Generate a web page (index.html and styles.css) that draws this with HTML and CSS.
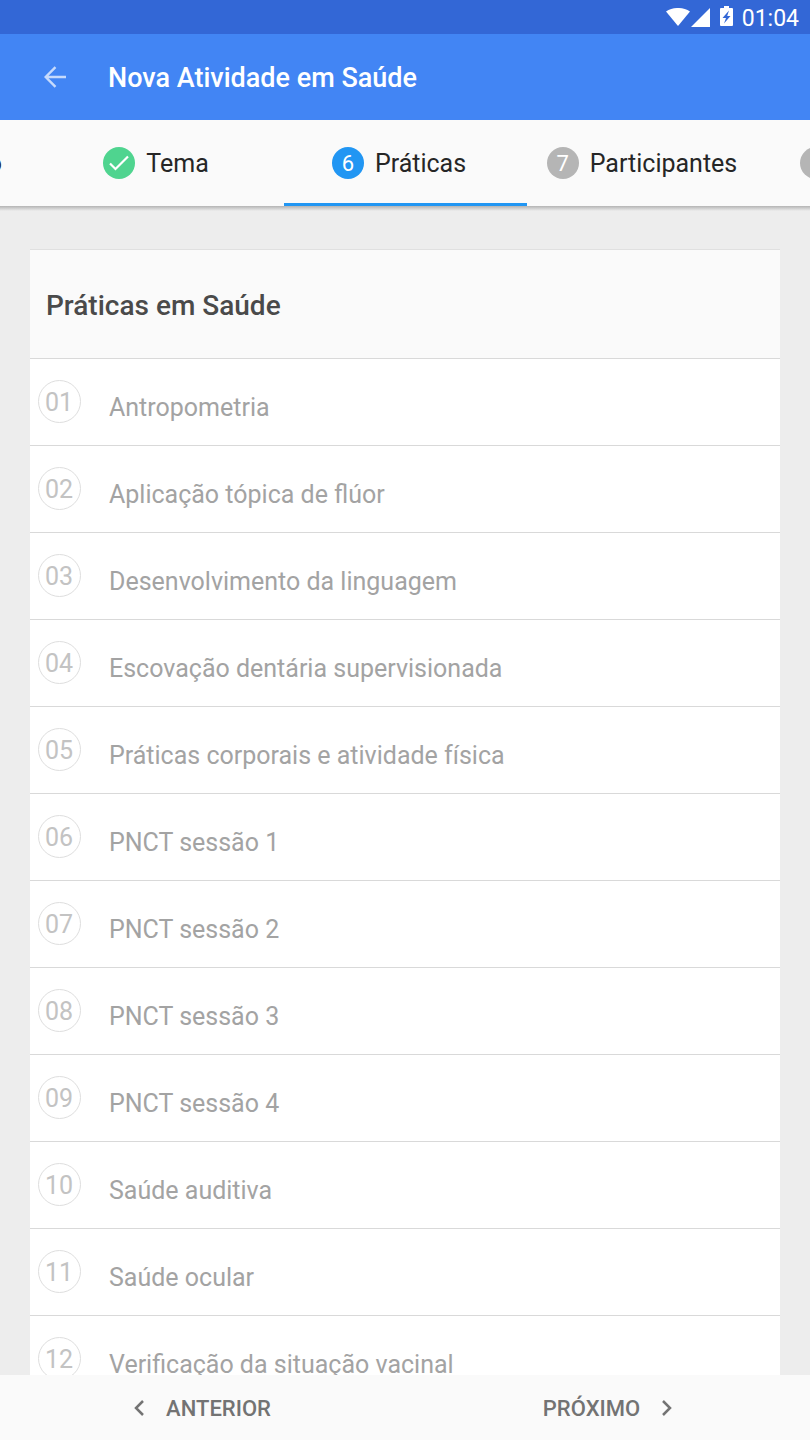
FILE: index.html
```html
<!DOCTYPE html>
<html lang="pt-BR">
<head>
<meta charset="utf-8">
<meta name="viewport" content="width=device-width, initial-scale=1">
<title>Nova Atividade em Saúde</title>
<link rel="stylesheet" href="styles.css">
</head>
<body>
<div class="status-bar">
  <svg class="status-wifi" width="24" height="18" viewBox="0 0 24 18" aria-hidden="true"><path d="M0 3.500C7-1.200 17-1.200 24 3.500L12 18z" fill="currentColor"/></svg>
  <svg class="status-signal" width="19" height="19" viewBox="0 0 19 19" aria-hidden="true"><path d="M19 0v19H0z" fill="currentColor"/></svg>
  <svg class="status-battery" width="13" height="20" viewBox="0 0 13 20" aria-hidden="true"><path fill-rule="evenodd" d="M4 0h5v2h3q1 0 1 1v16q0 1-1 1H1q-1 0-1-1V3q0-1 1-1h3zM9 4.500L2.500 12H6l-2 5.500L10.500 10H7.200z" fill="currentColor"/></svg>
  <time class="status-time">01:04</time>
</div>
<header class="app-bar">
  <button class="back" type="button" aria-label="Voltar">
    <svg width="22" height="22" viewBox="0 0 22 22" aria-hidden="true"><path d="M22 11H2M11.500 1.200L1.700 11l9.800 9.800" fill="none" stroke="currentColor" stroke-width="2.400"/></svg>
  </button>
  <h1 class="app-title">Nova Atividade em Saúde</h1>
</header>
<nav class="steps" aria-label="Etapas">
  <a class="step" href="#publico"><span class="badge badge-done">✓</span><span class="step-label">Público alvo</span></a>
  <a class="step" href="#tema"><span class="badge badge-done"><svg width="20" height="16" viewBox="0 0 20 16" aria-hidden="true"><path d="M1 8.500l5.500 5.500L19 1.500" fill="none" stroke="currentColor" stroke-width="2.200"/></svg></span><span class="step-label">Tema</span></a>
  <a class="step step-active" href="#praticas" aria-current="step"><span class="badge badge-active">6</span><span class="step-label">Práticas</span></a>
  <a class="step" href="#participantes"><span class="badge">7</span><span class="step-label">Participantes</span></a>
  <a class="step" href="#finalizacao"><span class="badge">8</span><span class="step-label">Finalização</span></a>
</nav>
<main class="content">
  <section class="card" id="praticas">
    <h2 class="card-title">Práticas em Saúde</h2>
    <ol class="list">
      <li class="item"><span class="number">01</span><span class="label">Antropometria</span></li>
      <li class="item"><span class="number">02</span><span class="label">Aplicação tópica de flúor</span></li>
      <li class="item"><span class="number">03</span><span class="label">Desenvolvimento da linguagem</span></li>
      <li class="item"><span class="number">04</span><span class="label">Escovação dentária supervisionada</span></li>
      <li class="item"><span class="number">05</span><span class="label">Práticas corporais e atividade física</span></li>
      <li class="item"><span class="number">06</span><span class="label">PNCT sessão 1</span></li>
      <li class="item"><span class="number">07</span><span class="label">PNCT sessão 2</span></li>
      <li class="item"><span class="number">08</span><span class="label">PNCT sessão 3</span></li>
      <li class="item"><span class="number">09</span><span class="label">PNCT sessão 4</span></li>
      <li class="item"><span class="number">10</span><span class="label">Saúde auditiva</span></li>
      <li class="item"><span class="number">11</span><span class="label">Saúde ocular</span></li>
      <li class="item"><span class="number">12</span><span class="label">Verificação da situação vacinal</span></li>
    </ol>
  </section>
</main>
<footer class="pager">
  <button class="pager-button" type="button"><svg width="10" height="16" viewBox="0 0 10 16" aria-hidden="true"><path d="M9 1L2 8l7 7" fill="none" stroke="currentColor" stroke-width="2.500"/></svg><span class="pager-label">ANTERIOR</span></button>
  <button class="pager-button" type="button"><span class="pager-label">PRÓXIMO</span><svg width="10" height="16" viewBox="0 0 10 16" aria-hidden="true"><path d="M1 1l7 7-7 7" fill="none" stroke="currentColor" stroke-width="2.500"/></svg></button>
</footer>
</body>
</html>
```

FILE: styles.css
```css
* {
  box-sizing: border-box;
}

body {
  display: flex;
  flex-direction: column;
  height: 100vh;
  margin: 0;
  overflow: hidden;
  background: #ededed;
  font-family: Roboto, "Noto Sans", sans-serif;
}

button {
  padding: 0;
  border: 0;
  background: none;
  font: inherit;
  cursor: pointer;
}

svg {
  display: block;
  flex: none;
}

.status-bar {
  display: flex;
  flex: none;
  align-items: center;
  justify-content: flex-end;
  height: 34px;
  padding: 0 11px;
  background: #3367d6;
  color: #fff;
}

.status-signal {
  margin-left: 1px;
}

.status-battery {
  margin: 0 9px 2px 10px;
}

.status-time {
  padding-top: 4px;
  font-size: 23px;
  font-weight: 400;
  line-height: 28px;
}

.app-bar {
  display: flex;
  flex: none;
  align-items: center;
  gap: 42px;
  height: 86px;
  padding: 0 44px;
  background: #4285f4;
  color: #fff;
}

.back {
  color: #c6dafc;
}

.app-title {
  margin: 0;
  padding-top: 2px;
  font-size: 27px;
  font-weight: 500;
  line-height: 32px;
}

.steps {
  display: flex;
  flex: none;
  justify-content: center;
  height: 86px;
  overflow: hidden;
  background: #fafafa;
}

.step {
  display: flex;
  flex: 0 0 30%;
  align-items: center;
  justify-content: center;
  padding: 2px 12px 0 0;
  border-bottom: 3px solid transparent;
  color: #262626;
  font-size: 25px;
  line-height: 32px;
  text-decoration: none;
  white-space: nowrap;
}

.step-active {
  border-bottom-color: #2196f3;
}

.step-label {
  padding-top: 2px;
}

.badge {
  display: flex;
  flex: none;
  align-items: center;
  justify-content: center;
  width: 32px;
  height: 32px;
  margin-right: 11px;
  padding-top: 2px;
  border-radius: 50%;
  background: #b5b5b5;
  color: #fff;
  font-size: 22px;
}

.badge-done {
  padding-top: 0;
  background: #4fd48f;
}

.badge-active {
  background: #2196f3;
}

.content {
  flex: 1;
  min-height: 0;
  padding: 43px 30px 0;
  overflow: hidden;
  background: linear-gradient(#b4b4b4, #ededed 5px);
}

.card {
  border-top: 1px solid #e0e0e0;
  background: #fff;
}

.card-title {
  margin: 0;
  padding: 40px 16px 36px;
  background: #fafafa;
  color: #4a4a4a;
  font-size: 28px;
  font-weight: 500;
  line-height: 32px;
}

.list {
  margin: 0;
  padding: 0;
  list-style: none;
}

.item {
  display: flex;
  gap: 28px;
  height: 87px;
  padding: 21px 8px 0;
  border-top: 1px solid #d9d9d9;
}

.number {
  display: flex;
  flex: none;
  align-items: center;
  justify-content: center;
  width: 43px;
  height: 43px;
  padding: 2px 1px 0 0;
  border: 1px solid #dedede;
  border-radius: 50%;
  color: #c3c3c3;
  font-size: 25px;
}

.label {
  padding-top: 12px;
  color: #a3a3a3;
  font-size: 25px;
  line-height: 32px;
}

.pager {
  display: flex;
  flex: none;
  height: 65px;
  background: #fafafa;
}

.pager-button {
  display: flex;
  flex: 1;
  align-items: center;
  justify-content: center;
  gap: 22px;
  color: #737373;
  font-size: 22px;
  font-weight: 500;
  line-height: 32px;
}

.pager-label {
  padding-top: 2px;
}
```
